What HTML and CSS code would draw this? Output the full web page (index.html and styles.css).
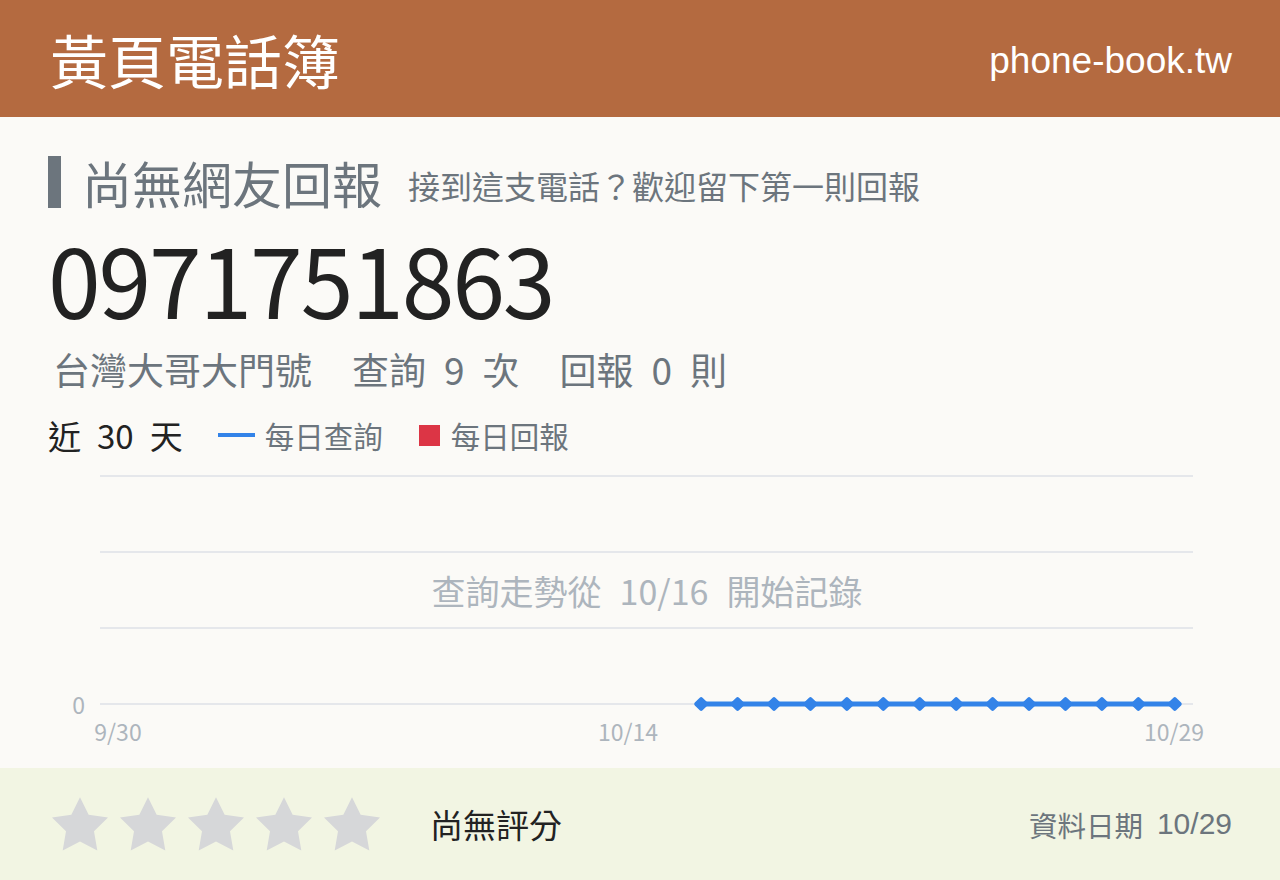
FILE: index.html
```html
<!DOCTYPE html>
<html lang="zh-Hant">
<head>
    <meta charset="UTF-8">
    <meta name="viewport" content="width=device-width, initial-scale=1.0">
    <title>0971751863 - 黃頁電話簿</title>
    <link rel="stylesheet" href="styles.css">
</head>
<body>

<header class="site-header">
    <div class="site-title">黃頁電話簿</div>
    <div class="site-domain">phone-book.tw</div>
</header>

<main class="page">
    <div class="report-head">
        <span class="report-bar"></span>
        <h1 class="report-title">尚無網友回報</h1>
        <span class="report-sub">接到這支電話？歡迎留下第一則回報</span>
    </div>

    <div class="phone-number">0971751863</div>

    <div class="phone-info">
        <span class="carrier">台灣大哥大門號</span>
        <span class="stat">查詢<span class="num">9</span>次</span>
        <span class="stat">回報<span class="num">0</span>則</span>
    </div>

    <div class="chart-legend">
        <span class="range">近<span class="num">30</span>天</span>
        <span class="legend-item"><i class="swatch-line"></i>每日查詢</span>
        <span class="legend-item"><i class="swatch-box"></i>每日回報</span>
    </div>

    <!-- daily query chart, 9/30 - 10/29 -->
    <svg class="chart" width="1184" height="313" viewBox="48 455 1184 313">
        <g class="grid">
            <line x1="100" y1="476" x2="1193" y2="476"></line>
            <line x1="100" y1="552" x2="1193" y2="552"></line>
            <line x1="100" y1="628" x2="1193" y2="628"></line>
            <line x1="100" y1="704" x2="1193" y2="704"></line>
        </g>
        <text class="chart-note" x="647" y="590">查詢走勢從<tspan dx="18">10/16</tspan><tspan dx="18">開始記錄</tspan></text>
        <text class="axis-label" x="85" y="704" text-anchor="end">0</text>
        <text class="axis-label" x="118" y="731" text-anchor="middle">9/30</text>
        <text class="axis-label" x="628" y="731" text-anchor="middle">10/14</text>
        <text class="axis-label" x="1174" y="731" text-anchor="middle">10/29</text>
        <g id="series"></g>
    </svg>
</main>

<footer class="rating-bar">
    <div class="rating">
        <div class="stars" id="stars"></div>
        <span class="rating-text">尚無評分</span>
    </div>
    <div class="data-date">資料日期<span class="date-num">10/29</span></div>
</footer>

<script>
    // Daily query counts, one per day from 9/30 (null = not recorded yet)
    const queries = [];
    for (let i = 0; i < 30; i++) {
        queries.push(i < 16 ? null : 0);
    }

    const plotLeft = 100;
    const plotRight = 1193;
    const baseY = 704;
    const step = (plotRight - plotLeft) / queries.length;

    function drawSeries() {
        const g = document.getElementById('series');
        const pts = [];
        queries.forEach((v, i) => {
            if (v === null) return;
            pts.push([plotLeft + step * (i + 0.5), baseY - v * 76]);
        });

        let html = `<polyline class="series-line" points="${pts.map(p => p.join(',')).join(' ')}"></polyline>`;
        pts.forEach(p => {
            html += `<rect class="series-dot" x="${p[0] - 5.5}" y="${p[1] - 5.5}" width="11" height="11" rx="2"
                transform="rotate(45 ${p[0]} ${p[1]})"></rect>`;
        });
        g.innerHTML = html;
    }

    function drawStars() {
        const star = '<svg class="star" viewBox="2 2 20 19.1" width="56" height="54"><path d="M12 2l3.09 6.26L22 9.27l-5 4.87 1.18 6.88L12 17.77l-6.18 3.25L7 14.14 2 9.27l6.91-1.01L12 2z"/></svg>';
        document.getElementById('stars').innerHTML = star.repeat(5);
    }

    drawSeries();
    drawStars();
</script>

</body>
</html>
```

FILE: styles.css
```css
body {
    margin: 0;
    background-color: #fbfaf7;
    font-family: "Noto Sans CJK TC", "Noto Sans", sans-serif;
    color: #6c757d;
}

.site-header {
    height: 117px;
    background-color: #b46a40;
    color: #fff;
    padding: 0 48px 0 50px;
    display: flex;
    align-items: center;
    justify-content: space-between;
}

.site-title {
    font-size: 58px;
    line-height: 1;
}

.site-domain {
    font-family: "Liberation Sans", Arial, sans-serif;
    font-size: 37px;
    padding-top: 4px;
}

.page {
    padding: 0 48px;
}

.report-head {
    display: flex;
    align-items: center;
    height: 52px;
    margin-top: 39px;
}

.report-bar {
    width: 13px;
    height: 52px;
    background-color: #6c757d;
    margin-right: 21px;
}

.report-title {
    margin: 0;
    font-size: 50px;
    font-weight: normal;
    line-height: 52px;
}

.report-sub {
    font-size: 32px;
    margin-left: 26px;
    padding-top: 6px;
}

.phone-number {
    margin-top: 30px;
    font-size: 95px;
    line-height: 80px;
    letter-spacing: -2.2px;
    color: #222;
}

.phone-info {
    margin-top: 29px;
    font-size: 37px;
    line-height: 44px;
    padding-left: 5px;
    display: flex;
    gap: 40px;
}

.phone-info .num {
    margin: 0 18px;
}

.chart-legend {
    margin-top: 24px;
    height: 40px;
    display: flex;
    align-items: center;
}

.range {
    font-size: 33px;
    color: #222;
    margin-right: 35px;
}

.range .num {
    margin: 0 16px;
}

.legend-item {
    display: flex;
    align-items: center;
    font-size: 29.5px;
    margin-right: 36px;
}

.swatch-line {
    width: 37px;
    height: 4px;
    background-color: #3383e8;
    margin-right: 10px;
}

.swatch-box {
    width: 21px;
    height: 21px;
    background-color: #dc3545;
    margin-right: 11px;
}

.chart {
    display: block;
}

.grid line {
    stroke: #e5e7eb;
    stroke-width: 2;
}

.chart-note {
    font-size: 34px;
    fill: #adb5bd;
    text-anchor: middle;
    dominant-baseline: central;
}

.axis-label {
    font-size: 23px;
    fill: #adb5bd;
    dominant-baseline: central;
}

.series-line {
    fill: none;
    stroke: #3383e8;
    stroke-width: 5;
}

.series-dot {
    fill: #3383e8;
}

.rating-bar {
    height: 112px;
    background-color: #f2f5e3;
    padding: 0 48px 0 52px;
    display: flex;
    align-items: center;
    justify-content: space-between;
}

.rating {
    display: flex;
    align-items: center;
}

.stars {
    display: flex;
    gap: 12px;
    margin-right: 50px;
}

.star {
    display: block;
    fill: #d6d7d9;
}

.rating-text {
    font-size: 33px;
    color: #222;
}

.data-date {
    font-size: 28.5px;
    display: flex;
    align-items: center;
}

.date-num {
    font-family: "Liberation Sans", Arial, sans-serif;
    font-size: 30px;
    margin-left: 14px;
}
```
